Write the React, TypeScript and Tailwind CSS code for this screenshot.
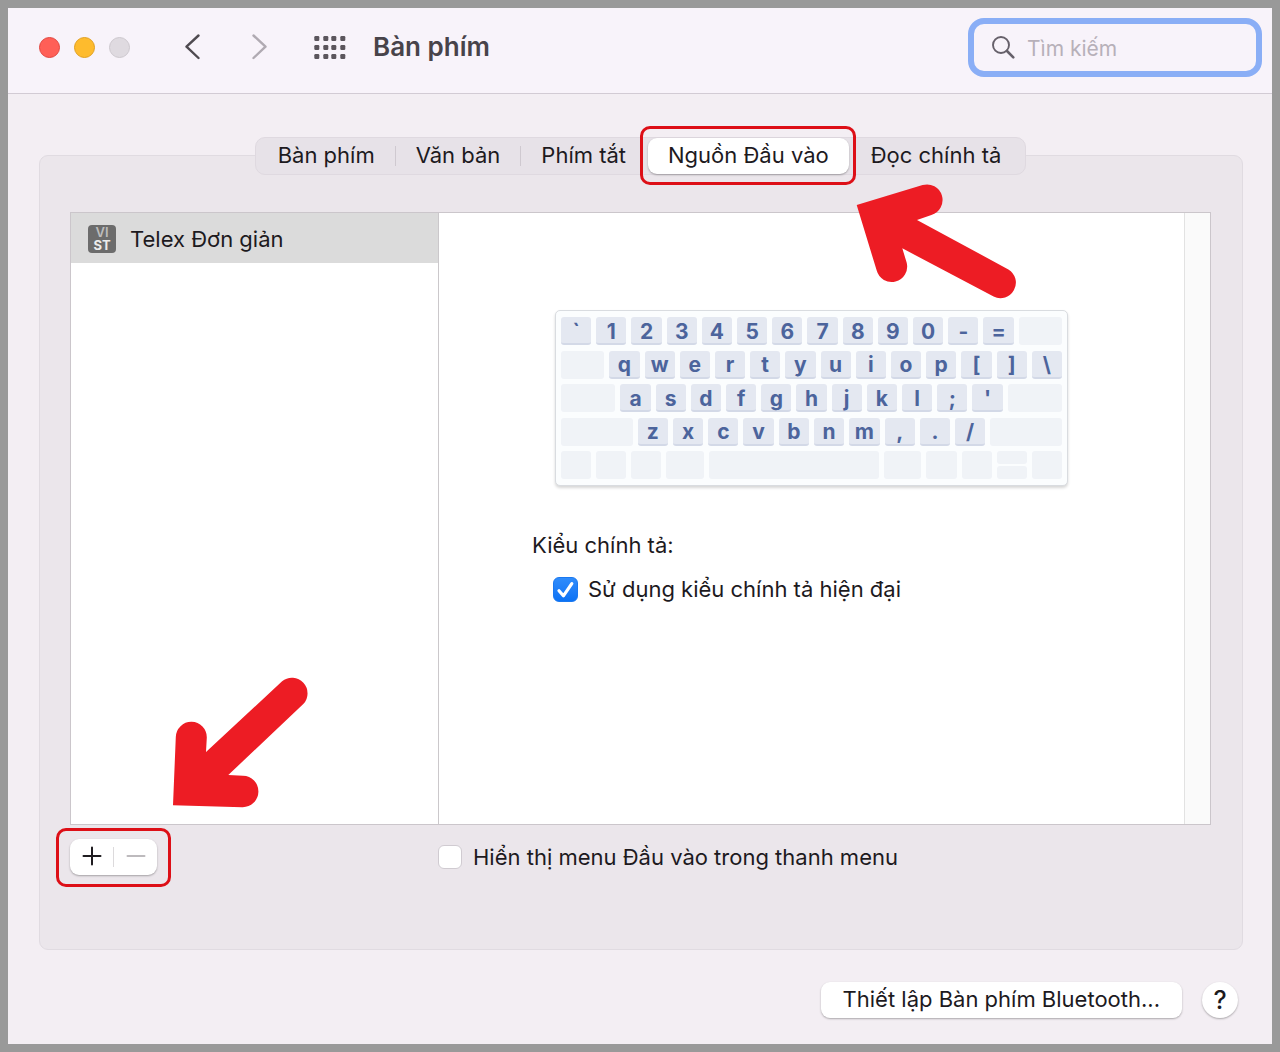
import { useState } from "react";

type Key = { label?: string; size: string; split?: boolean };

const UNIT = "grow-[30]";

const letters = (text: string): Key[] =>
  text.split("").map((label) => ({ label, size: UNIT }));

const keyboardRows: Key[][] = [
  [...letters("`1234567890-="), { size: "grow-[43]" }],
  [{ size: "grow-[43]" }, ...letters("qwertyuiop[]\\")],
  [{ size: "grow-[54]" }, ...letters("asdfghjkl;'"), { size: "grow-[54]" }],
  [{ size: "grow-[71]" }, ...letters("zxcvbnm,./"), { size: "grow-[71]" }],
  [
    { size: UNIT },
    { size: UNIT },
    { size: UNIT },
    { size: "grow-[37]" },
    { size: "grow-[170]" },
    { size: "grow-[37]" },
    { size: UNIT },
    { size: UNIT },
    { size: UNIT, split: true },
    { size: UNIT },
  ],
];

function KeyCap({ label, size, split }: Key) {
  if (split) {
    return (
      <div className={`flex basis-0 flex-col gap-0.5 ${size}`}>
        <div className="flex-1 rounded-[3px] bg-[#f0f3f7]" />
        <div className="flex-1 rounded-[3px] bg-[#f0f3f7]" />
      </div>
    );
  }
  if (!label) {
    return <div className={`basis-0 rounded-[3px] bg-[#f0f3f7] ${size}`} />;
  }
  return (
    <div
      className={`flex basis-0 items-center justify-center rounded-[3px] border-b-2 border-[#d3d9e7] bg-[#e4e8f1] pt-0.5 text-[21px] leading-none font-bold text-[#4c649c] ${size}`}
    >
      {label}
    </div>
  );
}

function Keyboard() {
  return (
    <div className="mx-auto flex h-[176px] w-full max-w-[513px] flex-col justify-between rounded-[5px] border border-[#d9dce0] bg-[#fbfdfe] px-[5px] py-1.5 shadow-[0_2px_3px_rgba(0,0,0,0.16)]">
      {keyboardRows.map((row, i) => (
        <div key={i} className="flex h-7 gap-[5px]">
          {row.map((key, j) => (
            <KeyCap key={j} {...key} />
          ))}
        </div>
      ))}
    </div>
  );
}

function Header() {
  return (
    <header className="flex items-center border-b border-[#d2cbd4] bg-[#f8f3fa] pt-[10px] pr-[10px] pb-4 pl-[31px]">
      <div className="flex gap-[14px]">
        <button aria-label="Đóng" className="size-[21px] rounded-full border border-[#e2463f] bg-[#ff5f57]" />
        <button aria-label="Thu nhỏ" className="size-[21px] rounded-full border border-[#e1a020] bg-[#febb2d]" />
        <button aria-label="Phóng to" className="size-[21px] rounded-full border border-[#cdc8ce] bg-[#dfdae0]" />
      </div>
      <button aria-label="Quay lại" className="ml-[54px] pb-0.5">
        <svg width="18" height="26" viewBox="0 0 18 26" fill="none" stroke="#4f4a50" strokeWidth="2.4" strokeLinecap="round" strokeLinejoin="round">
          <path d="M14.5 1.5 2.5 12.7 14.5 24" />
        </svg>
      </button>
      <button aria-label="Tiếp" className="ml-12 pb-0.5">
        <svg width="18" height="26" viewBox="0 0 18 26" fill="none" stroke="#b0aab2" strokeWidth="2.4" strokeLinecap="round" strokeLinejoin="round">
          <path d="M3.5 1.5 15.5 12.7 3.5 24" />
        </svg>
      </button>
      <button aria-label="Hiển thị tất cả" className="ml-[46px] pb-px">
        <svg width="32" height="23" viewBox="0 0 32 23" fill="#5b555c">
          {[0, 9, 18].map((y) =>
            [0, 9, 17, 26].map((x) => <rect key={`${x}-${y}`} x={x + 0.3} y={y} width="5" height="5" rx="1.2" />),
          )}
        </svg>
      </button>
      <h1 className="ml-[27px] pb-0.5 text-[26px] leading-8 font-semibold text-[#48434a]">Bàn phím</h1>
      <label className="ml-auto flex h-[59px] w-[294px] items-center rounded-[16px] border-6 border-[#8aaef6] pl-[18px]">
        <svg className="shrink-0" width="23" height="23" viewBox="0 0 23 23" fill="none" stroke="#66606a" strokeLinecap="round">
          <circle cx="9" cy="9" r="8" strokeWidth="1.9" />
          <path d="m15 15 6.3 6.3" strokeWidth="2.6" />
        </svg>
        <input
          type="search"
          aria-label="Tìm kiếm"
          placeholder="Tìm kiếm"
          className="ml-3 w-full min-w-0 bg-transparent pt-0.5 text-[21px] leading-7 outline-none placeholder:text-[#b7b0b9]"
        />
      </label>
    </header>
  );
}

const tabs = [
  { name: "Bàn phím", padding: "pl-[22px] pr-5" },
  { name: "Văn bản", padding: "px-5" },
  { name: "Phím tắt", padding: "px-5" },
  { name: "Nguồn Đầu vào", padding: "px-5" },
  { name: "Đọc chính tả", padding: "pl-[22px] pr-6" },
];

function Tabs() {
  const [active, setActive] = useState(3);
  return (
    <div role="tablist" className="relative -mt-[19px] flex h-[38px] items-center self-center rounded-[10px] border border-[#dfd9e0] bg-[#e7e2e8]">
      {tabs.map(({ name, padding }, i) => (
        <div key={name} className="relative flex items-center">
          {i > 0 && i < 4 && <span className={i === 3 ? "w-0.5" : "h-5 w-px bg-[#cfc9d0]"} />}
          <button
            role="tab"
            aria-selected={i === active}
            onClick={() => setActive(i)}
            className={`h-9 pb-0.5 whitespace-nowrap ${padding} ${
              i === active ? "rounded-[9px] bg-white shadow-[0_1px_2px_rgba(0,0,0,0.3)]" : ""
            }`}
          >
            {name}
          </button>
          {i === 3 && (
            <>
              <div className="pointer-events-none absolute -top-3 -right-[7px] -bottom-[11px] -left-1.5 rounded-[10px] border-3 border-[#dd0f17]" />
              <svg className="pointer-events-none absolute top-[45px] left-[210px] z-10" width="162" height="116" viewBox="857 183 162 116" fill="#ed1c24">
                <path d="M857.7 205 923.6 185.1A15.5 15.5 0 0 1 932.4 214.9L918 220 1009.4 269.4A15.5 15.5 0 0 1 994.6 296.6L903.3 248.3 907.7 262.8A15.5 15.5 0 0 1 877.7 270.6Z" />
              </svg>
            </>
          )}
        </div>
      ))}
    </div>
  );
}

function InputSources() {
  return (
    <div className="mt-[37px] flex flex-1 border border-[#cbc6cb] bg-white">
      <ul className="w-[368px] shrink-0 border-r border-[#cbc8cb]">
        <li className="flex h-[50px] items-center bg-[#dbdbdb] pt-0.5 pl-[17px]">
          <span className="flex size-7 flex-col items-center justify-center rounded-[4px] bg-[#6c6c6c] text-[13px] leading-[13px] font-semibold">
            <span className="text-[#bdbdbd]">VI</span>
            <span className="font-bold text-[#ececec]">ST</span>
          </span>
          <span className="ml-[14px]">Telex Đơn giản</span>
        </li>
      </ul>
      <div className="min-w-0 flex-1 pt-[97px]">
        <Keyboard />
        <section className="pt-[43px] pl-[93px]">
          <h2 className="leading-8">Kiểu chính tả:</h2>
          <label className="mt-3 ml-[21px] flex items-center gap-[10px] leading-8">
            <span className="relative flex size-[25px]">
              <input
                type="checkbox"
                defaultChecked
                className="peer size-[25px] appearance-none rounded-[6px] border border-[#c9c4ca] bg-white checked:border-[#1a78f0] checked:bg-linear-to-b checked:from-[#2f8cfb] checked:to-[#0a72f5]"
              />
              <svg className="pointer-events-none absolute inset-0 hidden peer-checked:block" width="25" height="25" viewBox="0 0 25 25" fill="none" stroke="#fff" strokeWidth="3.2" strokeLinecap="round" strokeLinejoin="round">
                <path d="m6 13.8 4.4 5L18.8 6.6" />
              </svg>
            </span>
            Sử dụng kiểu chính tả hiện đại
          </label>
        </section>
      </div>
      <div className="w-[26px] shrink-0 border-l border-[#e2e2e2] bg-[#fafafa]" />
    </div>
  );
}

function SourceActions() {
  return (
    <div className="flex items-center pt-[14px]">
      <div className="relative flex h-9 w-[87px] items-center rounded-[9px] bg-white shadow-[0_1px_2px_rgba(0,0,0,0.3)]">
        <button aria-label="Thêm" className="flex h-full flex-1 items-center justify-center pb-0.5">
          <svg width="20" height="20" viewBox="0 0 20 20" stroke="#1f1c20" strokeWidth="2" strokeLinecap="round">
            <path d="M10 1.5v17M1.5 10h17" />
          </svg>
        </button>
        <span className="h-5 w-px bg-[#dcdadc]" />
        <button aria-label="Xóa" className="flex h-full flex-1 items-center justify-center pb-0.5">
          <svg width="20" height="20" viewBox="0 0 20 20" stroke="#bdbabd" strokeWidth="2" strokeLinecap="round">
            <path d="M1.5 10h17" />
          </svg>
        </button>
        <div className="pointer-events-none absolute -inset-x-[14px] -top-[11px] -bottom-3 rounded-[10px] border-3 border-[#dd0f17]" />
        <svg className="pointer-events-none absolute -top-[163px] left-[102px]" width="138" height="132" viewBox="172 676 138 132" fill="#ed1c24">
          <path d="M173 805.3 175.8 737A15.5 15.5 0 0 1 206.8 737.6L206 752 282.1 681.3A15.6 15.6 0 0 1 303.3 704.1L228.3 775 243 775.7A15.7 15.7 0 0 1 242.3 807.2Z" />
        </svg>
      </div>
      <label className="ml-[281px] flex items-center gap-[11px] leading-8">
        <input
          type="checkbox"
          className="size-6 appearance-none rounded-[6px] border border-[#d0cbd1] bg-white checked:bg-[#0a72f5]"
        />
        Hiển thị menu Đầu vào trong thanh menu
      </label>
    </div>
  );
}

export default function App() {
  return (
    <div className="flex min-h-screen flex-col border-8 border-[#999999] bg-[#f3eef3] font-['Inter','Noto_Sans',sans-serif] text-[22px] text-[#1d1a1e]">
      <Header />
      <main className="flex flex-1 flex-col pt-[61px] pr-[29px] pb-[26px] pl-[31px]">
        <div className="flex flex-1 flex-col rounded-[9px] border border-[#e0dbe1] bg-[#ebe6eb] pr-[31px] pb-[74px] pl-[30px]">
          <Tabs />
          <InputSources />
          <SourceActions />
        </div>
        <footer className="flex items-center justify-end gap-5 pt-8 pr-[5px]">
          <button className="h-9 rounded-[9px] bg-white px-[22px] pb-0.5 shadow-[0_1px_2px_rgba(0,0,0,0.3)]">
            Thiết lập Bàn phím Bluetooth...
          </button>
          <button aria-label="Trợ giúp" className="size-9 rounded-full bg-white text-[25px] leading-9 font-medium shadow-[0_1px_2px_rgba(0,0,0,0.3)]">
            ?
          </button>
        </footer>
      </main>
    </div>
  );
}
